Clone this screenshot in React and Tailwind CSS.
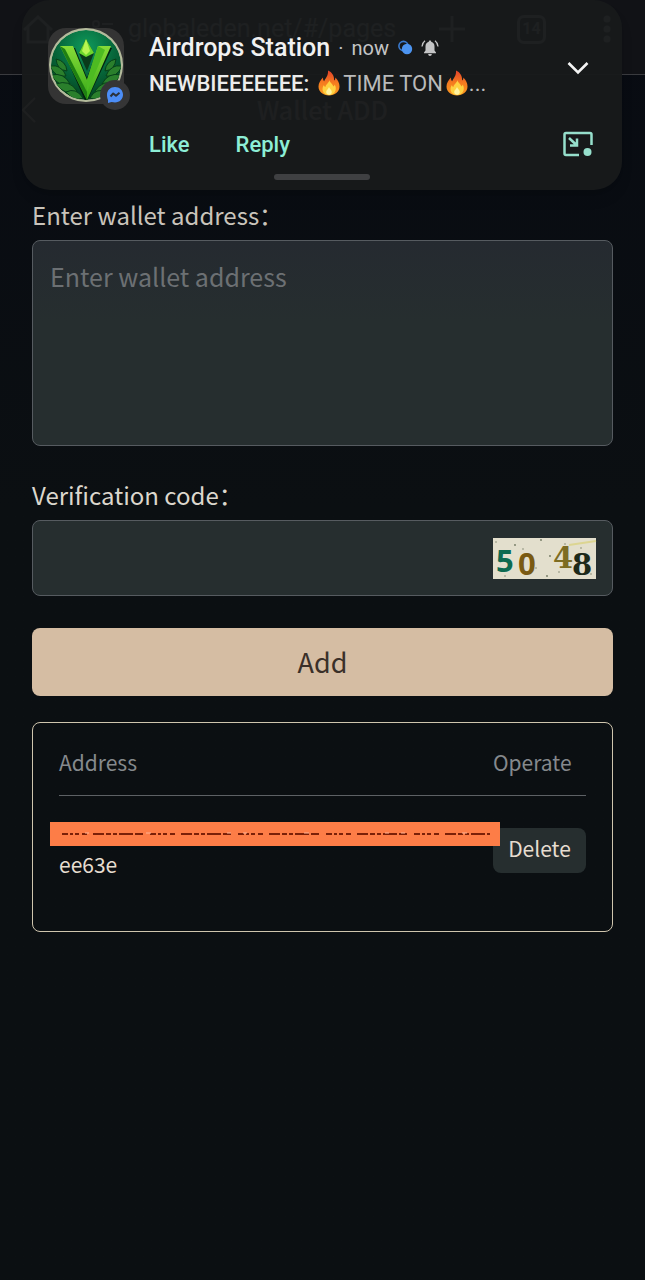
import { useState } from 'react';

const wallets = [
  { id: 1, tail: 'ee63e' },
]

function Flame() {
  return (
    <svg viewBox="0 0 24 26" className="w-6 h-7 shrink-0" aria-hidden="true">
      <defs>
        <linearGradient id="flame" x1="0" y1="0" x2="0" y2="1">
          <stop offset="0" stopColor="#e2402a" />
          <stop offset="0.5" stopColor="#f57c1f" />
          <stop offset="1" stopColor="#fb9a20" />
        </linearGradient>
      </defs>
      <path fill="url(#flame)" d="M11 0.5C15 2 17.500 6 17 10.500C18 10 18.500 8.500 18.300 7.500C21 10 22.500 13 22.500 16.500C22.500 22 17.500 25.500 12 25.500S1.500 22 1.500 16.500C1.500 13 3.500 10 6 7.500C6 9 6.200 10.500 7.200 11.200C8 8.500 11.500 6.500 11 0.500Z" />
      <path fill="#fed141" d="M12.500 10C12.500 13 16 13.500 16.200 16.500C17 16 17.500 15.500 17.600 14.500C19 16.500 19 19 18.500 20.500C17.500 23.500 15 25 12 25S6.500 23.500 5.700 20.500C5.300 18.500 5.700 16.500 7 15C7 16 7.500 16.700 8.500 17C8.500 14.500 12 13 12.500 10Z" />
      <path fill="#fff3a0" d="M12 17C12.500 19 15 20 14.800 22.200C14.500 24 13.300 24.800 12 24.800S9 23.800 9.200 21.800C9.400 20 11.500 19 12 17Z" />
    </svg>
  )
}

function Avatar() {
  return (
    <div className="relative w-[76px] h-[76px] shrink-0 rounded-[18px] bg-[#343434]">
      <svg viewBox="0 0 76 76" className="w-full h-full" aria-hidden="true">
        <defs>
          <radialGradient id="disc" cx="0.5" cy="0.25" r="0.75">
            <stop offset="0" stopColor="#0f9a5c" />
            <stop offset="0.55" stopColor="#06663a" />
            <stop offset="1" stopColor="#03401e" />
          </radialGradient>
          <linearGradient id="vee" x1="0" y1="0" x2="0" y2="1">
            <stop offset="0" stopColor="#86dc38" />
            <stop offset="1" stopColor="#35a818" />
          </linearGradient>
          <clipPath id="round"><circle cx="38" cy="37" r="35" /></clipPath>
        </defs>
        <circle cx="38" cy="37" r="37" fill="#b4bb9c" />
        <g clipPath="url(#round)">
          <circle cx="38" cy="37" r="35" fill="url(#disc)" />
          <g fill="#2a7f2c" stroke="#07401a" strokeWidth="1">
            <path d="M2 38Q14 36 18 48Q7 50 2 38Z" />
            <path d="M3 47Q16 44 22 56Q11 60 3 47Z" />
            <path d="M8 56Q21 51 29 63Q18 69 8 56Z" />
            <path d="M18 64Q28 59 35 70Q26 74 18 64Z" />
            <path d="M8 31Q18 33 19 43Q9 42 8 31Z" />
            <path d="M74 38Q62 36 58 48Q69 50 74 38Z" />
            <path d="M73 47Q60 44 54 56Q65 60 73 47Z" />
            <path d="M68 56Q55 51 47 63Q58 69 68 56Z" />
            <path d="M58 64Q48 59 42 70Q50 74 58 64Z" />
            <path d="M68 31Q58 33 57 43Q67 42 68 31Z" />
          </g>
          <path fill="#04230f" d="M14 20L38 75L64 20L50 20L39 50L27 20Z" />
          <path fill="url(#vee)" d="M12 18H25L39 52L50 18H63L39 72Z" />
          <path fill="#1f8012" d="M12 18L39 72V64L17 21Z" />
          <path fill="#4dbb22" d="M39 52V64L57 22L50 18Z" />
          <path fill="#0a3a1a" d="M31 25L38 11L46 25L39 43Z" />
          <path fill="#6bd62c" d="M38 11L46 25L38 29L31 25Z" />
          <path fill="#b8f552" d="M38 11L42 23L38 27L34 23Z" />
        </g>
      </svg>
      <div className="absolute -right-[6px] -bottom-[6px] w-[30px] h-[30px] rounded-full bg-[#353536] flex items-center justify-center">
        <svg viewBox="0 0 18 18" className="w-[18px] h-[18px]" aria-hidden="true">
          <path fill="#4c8df6" d="M9 1C4.400 1 1 4.300 1 8.700C1 11 1.500 12.500 2 14V17L5.500 16C7 16.300 8 16.400 9 16.400C13.600 16.400 17 13.100 17 8.700S13.600 1 9 1Z" />
          <path fill="none" stroke="#2b313c" strokeWidth="2" strokeLinejoin="round" d="M4.500 10.500L7.200 7.500L10 9.800L13.500 6.800" />
        </svg>
      </div>
    </div>
  )
}

function Notification() {
  return (
    <section className="absolute top-0 left-[22px] right-[23px] h-[190px] rounded-[28px] bg-[#181a1b]/97 font-[Roboto,sans-serif] shadow-lg">
      <div className="flex pl-[26px] pr-[26px] pt-7">
        <Avatar />
        <div className="ml-[25px] flex-1 min-w-0 pt-1">
          <div className="flex items-center h-8">
            <h2 className="text-[25px] font-medium text-[#f1f1f1]">Airdrops Station</h2>
            <span className="ml-2 text-[20px] text-[#c4c5c6]">·</span>
            <span className="ml-2 text-[20px] text-[#c4c5c6]">now</span>
            <svg viewBox="0 0 16 16" className="ml-2 w-4 h-4" aria-hidden="true">
              <circle cx="6.500" cy="6" r="4.600" fill="none" stroke="#3a7bd0" strokeWidth="1.600" />
              <circle cx="10" cy="9" r="5.200" fill="#4c94f0" />
            </svg>
            <svg viewBox="0 0 18 18" className="ml-2 w-[18px] h-[18px]" aria-hidden="true">
              <path fill="#c4c5c6" d="M9 1.500C9.800 1.500 10.200 2 10.200 2.800C12.500 3.400 13.500 5.200 13.500 7.500V11.500L15 13.500V14.200H3V13.500L4.500 11.500V7.500C4.500 5.200 5.500 3.400 7.800 2.800C7.800 2 8.200 1.500 9 1.500ZM7.200 15H10.800C10.800 16.200 10 17 9 17S7.200 16.200 7.200 15Z" />
              <path fill="none" stroke="#c4c5c6" strokeWidth="1.300" d="M1 7.500C1.200 5 2.200 3 4 1.700M17 7.500C16.800 5 15.800 3 14 1.700" />
            </svg>
          </div>
          <p className="flex items-center h-[38px] text-[22px] text-[#b9babb]">
            <span className="font-medium text-[#ececec] mr-2">NEWBIEEEEEEE:</span>
            <Flame />
            <span className="ml-[2px] mr-[2px]">TIME TON</span>
            <Flame />
            <span>...</span>
          </p>
        </div>
        <button aria-label="Expand" className="self-start mt-[22px] w-9 h-9 flex items-center justify-center rounded-full">
          <svg viewBox="0 0 24 14" className="w-6 h-[14px]" fill="none" stroke="#f4f4f4" strokeWidth="2.600" aria-hidden="true">
            <path d="M2.500 2L12 11.500L21.500 2" />
          </svg>
        </button>
      </div>
      <div className="flex items-center pl-[127px] pr-7 mt-6 h-8 text-[22px] font-medium text-[#8deed6]">
        <button>Like</button>
        <button className="ml-[46px]">Reply</button>
        <button aria-label="Open as bubble" className="ml-auto">
          <svg viewBox="0 0 32 26" className="w-8 h-[26px]" fill="none" stroke="#96dfcc" strokeWidth="2.500" aria-hidden="true">
            <path d="M17 24H4Q2.500 24 2.500 22.500V3.500Q2.500 2 4 2H28Q29.500 2 29.500 3.500V14" />
            <path d="M7 7L14.500 14M15 7.500V14.500H8" />
            <circle cx="25.500" cy="21" r="4" fill="#96dfcc" stroke="none" />
          </svg>
        </button>
      </div>
      <div className="mx-auto mt-[14px] w-24 h-[6px] rounded-full bg-[#3f4042]"></div>
    </section>
  )
}

function BrowserBar() {
  return (
    <div className="flex items-center h-[75px] pl-[22px] pr-[34px] pb-4 border-b border-[#3a3b3f] bg-[#111216] text-[#c8c9cb]">
      <svg viewBox="0 0 32 32" className="w-8 h-8" fill="none" stroke="currentColor" strokeWidth="3" aria-hidden="true">
        <path d="M2 17L16 4L30 17M6 14V29H26V14" />
      </svg>
      <svg viewBox="0 0 24 20" className="ml-9 w-6 h-5" fill="none" stroke="currentColor" strokeWidth="2" aria-hidden="true">
        <circle cx="6" cy="5" r="3" />
        <path d="M12 5H23M1 15H12" />
        <circle cx="18" cy="15" r="3" />
      </svg>
      <span className="ml-[14px] text-[25px] font-[Roboto,sans-serif]">globaleden.net/#/pages</span>
      <svg viewBox="0 0 26 26" className="ml-auto mr-[52px] w-[26px] h-[26px]" stroke="currentColor" strokeWidth="3" aria-hidden="true">
        <path d="M13 0V26M0 13H26" />
      </svg>
      <span className="flex items-center justify-center w-[29px] h-[29px] mr-[57px] border-[3px] border-current rounded-[7px] text-[16px] font-bold font-[Roboto,sans-serif]">14</span>
      <svg viewBox="0 0 8 28" className="w-2 h-7" fill="currentColor" aria-hidden="true">
        <circle cx="4" cy="4" r="3.500" />
        <circle cx="4" cy="14" r="3.500" />
        <circle cx="4" cy="24" r="3.500" />
      </svg>
    </div>
  )
}

function Captcha() {
  return (
    <svg viewBox="0 0 103 41" className="w-[103px] h-[41px] shrink-0 overflow-visible" role="img" aria-label="Captcha">
      <rect width="103" height="41" fill="#e3dfcd" />
      <path d="M76 7L103 3" stroke="#dcd592" strokeWidth="2" />
      <g fill="#6f7760">
        <circle cx="3" cy="4" r="0.700" /><circle cx="22" cy="7" r="0.900" /><circle cx="48" cy="2" r="0.900" />
        <circle cx="57" cy="18" r="0.900" /><circle cx="72" cy="6" r="0.700" /><circle cx="54" cy="38" r="0.900" />
        <circle cx="30" cy="11" r="0.700" /><circle cx="43" cy="30" r="0.700" /><circle cx="98" cy="36" r="0.700" />
        <circle cx="12" cy="38" r="0.700" /><circle cx="88" cy="10" r="0.700" /><circle cx="66" cy="34" r="0.700" />
      </g>
      <text x="3" y="34" fontSize="31" fontWeight="700" fontFamily="Open Sans, sans-serif" fill="#0d6a50">5</text>
      <text x="25" y="37" fontSize="31" fontWeight="700" fontFamily="Open Sans, sans-serif" fill="#7a5a12">0</text>
      <text x="60" y="30" fontSize="29" fontWeight="700" fontFamily="DejaVu Serif, serif" fill="#7d6c22">4</text>
      <text x="79" y="37" fontSize="29" fontWeight="700" fontFamily="DejaVu Serif, serif" fill="#1d2a1a">8</text>
    </svg>
  )
}

export default function App() {
  const [address, setAddress] = useState("")
  const [code, setCode] = useState("")
  const [list, setList] = useState(wallets)

  const handleAdd = () => {
    if (!address || !code) return
    setList([...list, { id: Date.now(), tail: address.slice(-5) }])
    setAddress("")
    setCode("")
  }
  const handleDelete = (id) => {
    setList(list.filter((item) => item.id !== id))
  }

  return (
    <div className="relative min-h-screen bg-[#0b0f12] bg-linear-to-b from-[#080b12] to-[#0b0f12] to-40% font-['Noto_Sans_CJK_SC',sans-serif]">
      <BrowserBar />
      <header className="flex items-center h-[70px] px-[22px] text-[#c9c4bd]">
        <svg viewBox="0 0 14 26" className="w-[14px] h-[26px]" fill="none" stroke="currentColor" strokeWidth="2" aria-hidden="true">
          <path d="M13 1L1 13L13 25" />
        </svg>
        <h1 className="flex-1 mr-[14px] text-center text-[25px] font-medium">Wallet ADD</h1>
      </header>
      <Notification />

      <main className="px-8 pt-[52px] pb-10">
        <label htmlFor="address" className="block mb-2 text-[24px] leading-[35px] text-[#c9c4bb]">Enter wallet address：</label>
        <textarea
          id="address"
          className="block w-full h-[206px] px-[17px] py-[17px] text-[25px] leading-9 resize-none outline-none rounded-lg border border-[#565b60] bg-linear-to-b from-[#252a30] to-[#262e2f] to-40% text-[#e6ddd0] placeholder:text-[#6c7073]"
          placeholder="Enter wallet address"
          value={address}
          onChange={(e) => setAddress(e.target.value)}
        />

        <label htmlFor="code" className="block mt-[31px] mb-2 text-[24px] leading-[35px] text-[#dcd7cd]">Verification code：</label>
        <div className="flex items-center h-[76px] px-4 rounded-lg border border-[#565b60] bg-[#262e2f]">
          <input
            id="code"
            className="flex-1 min-w-0 bg-transparent outline-none text-[25px] text-[#e6ddd0]"
            value={code}
            onChange={(e) => setCode(e.target.value)}
          />
          <Captcha />
        </div>

        <button onClick={handleAdd} className="block w-full h-[68px] mt-8 rounded-lg bg-[#d5bda3] text-[27px] text-[#3a3029]">Add</button>

        <div className="mt-[26px] min-h-[210px] px-[26px] pt-[13px] rounded-lg border border-[#cfc5ae]">
          <table className="w-full text-[21px] leading-8">
            <thead>
              <tr className="h-[59px] border-b border-[#5d6165] text-left text-[#85898d]">
                <th className="pb-[6px] font-normal">Address</th>
                <th className="w-[93px] pb-[6px] font-normal">Operate</th>
              </tr>
            </thead>
            <tbody>
              {list.map((item) => (
                <tr key={item.id} className="text-[#e6ddd0]">
                  <td className="relative pt-[52px] align-top">
                    <div className="absolute z-10 top-[26px] -left-[9px] -right-[7px] h-6 bg-[#fd7d47]">
                      <svg className="block w-full h-full" aria-hidden="true">
                        <line x1="12" y1="12" x2="440" y2="12" stroke="#7b2008" strokeWidth="2" strokeDasharray="6 2 3 2 4 3 5 6 11 2 5 2 4 2 14 2 8 7" />
                        <line x1="35" y1="11" x2="440" y2="11" stroke="#ffb394" strokeWidth="1" strokeDasharray="4 57 5 76 4 12" />
                      </svg>
                    </div>
                    {item.tail}
                  </td>
                  <td className="pt-8 align-top">
                    <button onClick={() => handleDelete(item.id)} className="block w-full h-[45px] pb-1 rounded-lg bg-[#262e2f]">Delete</button>
                  </td>
                </tr>
              ))}
            </tbody>
          </table>
        </div>
      </main>
    </div>
  )
}
